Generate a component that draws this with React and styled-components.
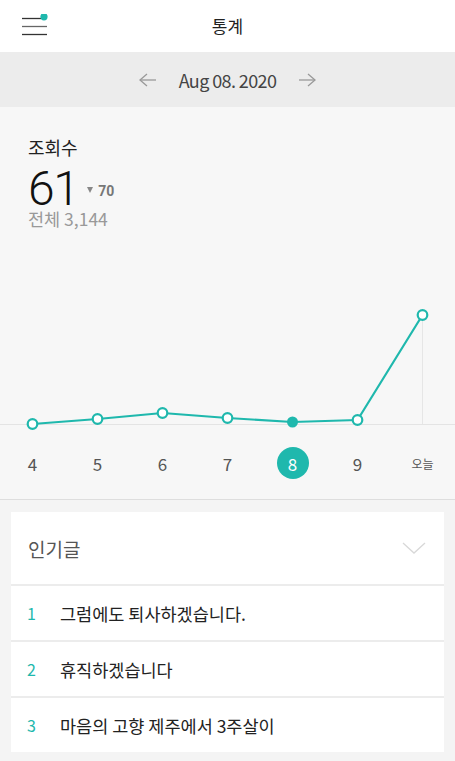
import React from 'react'
import styled, { createGlobalStyle } from 'styled-components'

const TEAL = '#1fb8ad'

const GlobalStyle = createGlobalStyle`
  html, body {
    margin: 0;
    padding: 0;
    background: #f4f4f4;
  }
  body {
    font-family: "Noto Sans CJK KR", "Noto Sans", sans-serif;
    color: #222;
  }
  * { box-sizing: border-box; }
`;

const Page = styled.div`
  width: 455px;
  min-height: 761px;
  background: #f4f4f4;
`;

const TopBar = styled.header`
  height: 52px;
  background: #fff;
  display: grid;
  grid-template-columns: 60px 1fr 60px;
  align-items: center;
`;

const MenuButton = styled.div`
  padding-left: 22px;
  display: flex;
  align-items: center;
`;

const Title = styled.h1`
  margin: 0;
  text-align: center;
  font-size: 17px;
  font-weight: 400;
  color: #222;
  line-height: 24px;
`;

const DateBar = styled.div`
  height: 55px;
  background: #ececec;
  display: flex;
  align-items: center;
  justify-content: center;
  gap: 22px;
`;

const DateText = styled.span`
  font-size: 18px;
  color: #444;
  letter-spacing: -0.6px;
  line-height: 24px;
`;

const Stats = styled.section`
  background: #f7f7f7;
  border-bottom: 1px solid #dedede;
`;

const StatsHead = styled.div`
  padding: 28px 28px 0;
`;

const Label = styled.div`
  font-size: 18px;
  line-height: 24px;
  color: #222;
`;

const CountRow = styled.div`
  display: flex;
  align-items: center;
  gap: 9px;
  margin-top: 10px;
`;

const BigCount = styled.span`
  font-family: Roboto, sans-serif;
  font-weight: 300;
  font-size: 48px;
  line-height: 40px;
  color: #111;
  letter-spacing: -1.5px;
`;

const Delta = styled.span`
  display: flex;
  align-items: center;
  gap: 5px;
  font-family: Roboto, sans-serif;
  font-weight: 700;
  font-size: 14px;
  color: #777;
  margin-top: 4px;
`;

const Triangle = styled.span`
  width: 0;
  height: 0;
  border-left: 3.5px solid transparent;
  border-right: 3.5px solid transparent;
  border-top: 6px solid #888;
  margin-top: -2px;
`;

const Total = styled.div`
  font-size: 17.5px;
  line-height: 20px;
  color: #999;
`;

const Chart = styled.svg`
  display: block;
  margin-top: 71px;
`;

const Days = styled.div`
  display: grid;
  grid-template-columns: repeat(7, 65px);
  padding: 12px 0 20px;
`;

const Day = styled.div`
  justify-self: center;
  width: 32px;
  height: 32px;
  border-radius: 50%;
  display: flex;
  align-items: center;
  justify-content: center;
  font-size: ${p => (p.$small ? '12px' : '17px')};
  color: ${p => (p.$active ? '#fff' : '#555')};
  background: ${p => (p.$active ? TEAL : 'transparent')};
`;

const Card = styled.section`
  margin: 12px 11px 0;
`;

const CardHead = styled.div`
  height: 72px;
  background: #fff;
  display: flex;
  align-items: center;
  justify-content: space-between;
  padding: 0 18px 0 17px;
`;

const CardTitle = styled.span`
  font-size: 19px;
  color: #555;
`;

const Row = styled.div`
  height: 56px;
  border-top: 2px solid #ececec;
  background: #fff;
  display: flex;
  align-items: center;
  padding-left: 16px;
  font-size: 17.5px;
  color: #222;
`;

const Rank = styled.span`
  width: 33px;
  color: ${TEAL};
  font-size: 16px;
`;

const days = ['4', '5', '6', '7', '8', '9', '오늘']
const values = [124, 119, 113, 118, 122, 120, 15]
const posts = ['그럼에도 퇴사하겠습니다.', '휴직하겠습니다', '마음의 고향 제주에서 3주살이']

function MenuIcon() {
  return (
    <svg width="28" height="24" viewBox="0 0 28 24">
      <line x1="0" y1="4.5" x2="19" y2="4.5" stroke="#333" strokeWidth="1.3" />
      <line x1="0" y1="12.5" x2="25" y2="12.5" stroke="#666" strokeWidth="1.3" />
      <line x1="0" y1="20.5" x2="25" y2="20.5" stroke="#333" strokeWidth="1.3" />
      <circle cx="22" cy="2.8" r="3.6" fill={TEAL} />
    </svg>
  )
}

function Arrow({ dir }) {
  const flip = dir === 'left' ? 'scale(-1,1) translate(-18,0)' : undefined
  return (
    <svg width="18" height="14" viewBox="0 0 18 14">
      <g transform={flip} fill="none" stroke="#999" strokeWidth="1.3">
        <line x1="1" y1="7" x2="17" y2="7" />
        <polyline points="10,1 17,7 10,13" />
      </g>
    </svg>
  )
}

function LineChart() {
  const pts = values.map((y, i) => [32.5 + i * 65, y])
  const path = pts.map(p => p.join(',')).join(' ')
  return (
    <Chart width="455" height="135" viewBox="0 0 455 135">
      <line x1="0" y1="124.5" x2="455" y2="124.5" stroke="#e4e4e4" strokeWidth="1" />
      <line x1="422.5" y1="15" x2="422.5" y2="124" stroke="#e6e6e6" strokeWidth="1" />
      <polyline points={path} fill="none" stroke={TEAL} strokeWidth="2.2" strokeLinejoin="round" />
      {pts.map(([x, y], i) =>
        i === 4
          ? <circle key={i} cx={x} cy={y} r="5.5" fill={TEAL} />
          : <circle key={i} cx={x} cy={y} r="4.8" fill="#fff" stroke={TEAL} strokeWidth="2.2" />
      )}
    </Chart>
  )
}

export default function App() {
  return (
    <Page>
      <GlobalStyle />
      <TopBar>
        <MenuButton><MenuIcon /></MenuButton>
        <Title>통계</Title>
        <span />
      </TopBar>
      <DateBar>
        <Arrow dir="left" />
        <DateText>Aug 08. 2020</DateText>
        <Arrow dir="right" />
      </DateBar>
      <Stats>
        <StatsHead>
          <Label>조회수</Label>
          <CountRow>
            <BigCount>61</BigCount>
            <Delta><Triangle />70</Delta>
          </CountRow>
          <Total>전체 3,144</Total>
        </StatsHead>
        <LineChart />
        <Days>
          {days.map((d, i) => (
            <Day key={d} $active={i === 4} $small={d === '오늘'}>{d}</Day>
          ))}
        </Days>
      </Stats>
      <Card>
        <CardHead>
          <CardTitle>인기글</CardTitle>
          <svg width="24" height="12" viewBox="0 0 24 12">
            <polyline points="1,1 12,11 23,1" fill="none" stroke="#d8d8d8" strokeWidth="1.3" />
          </svg>
        </CardHead>
        {posts.map((t, i) => (
          <Row key={t}>
            <Rank>{i + 1}</Rank>
            {t}
          </Row>
        ))}
      </Card>
    </Page>
  )
}
